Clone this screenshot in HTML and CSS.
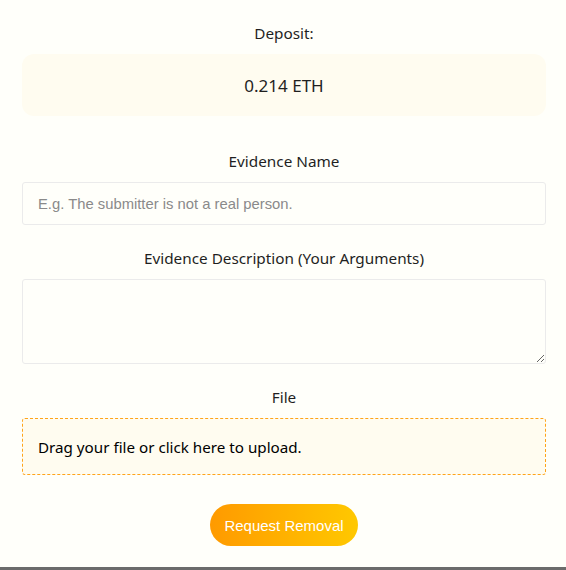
FILE: index.html
```html
<!DOCTYPE html>
<html>
<head>
<meta charset="utf-8">
<link rel="stylesheet" href="styles.css">
</head>
<body>
<div class="page">
  <form class="form">
    <div class="field">
      <div class="label">Deposit:</div>
      <div class="deposit">0.214 ETH</div>
    </div>
    <div class="field">
      <div class="label">Evidence Name</div>
      <input class="input" type="text" placeholder="E.g. The submitter is not a real person.">
    </div>
    <div class="field">
      <div class="label">Evidence Description (Your Arguments)</div>
      <textarea class="textarea"></textarea>
    </div>
    <div class="field">
      <div class="label">File</div>
      <div class="drop">Drag your file or click here to upload.</div>
    </div>
    <div class="actions">
      <button class="btn" type="button">Request Removal</button>
    </div>
  </form>
</div>
</body>
</html>
```
FILE: styles.css
```css
html, body {
  margin: 0;
  padding: 0;
  background: #fffffa;
}
.page {
  width: 566px;
  height: 567px;
  border-bottom: 3px solid #6b6b6b;
  box-sizing: content-box;
  font-family: "Noto Sans", "Open Sans", sans-serif;
  color: #1f1f1f;
}
.form {
  padding: 22px 20px 0 22px;
  display: flex;
  flex-direction: column;
}
.field {
  display: flex;
  flex-direction: column;
}
.label {
  text-align: center;
  font-size: 15.3px;
  font-weight: 400;
  line-height: 22px;
  margin-bottom: 10px;
}
.deposit {
  height: 62px;
  border-radius: 12px;
  background: #fffcf0;
  display: flex;
  align-items: center;
  justify-content: center;
  font-size: 17px;
  font-weight: 400;
  margin-bottom: 34px;
}
.input {
  height: 43px;
  box-sizing: border-box;
  border: 1px solid #ebebeb;
  border-radius: 3px;
  background: #fffffa;
  padding: 0 15px;
  font-family: "Liberation Sans", Arial, sans-serif;
  font-size: 14.8px;
  margin: 0 0 22px 0;
  outline: none;
}
.input::placeholder {
  color: #8a8a8a;
}
.textarea {
  height: 85px;
  box-sizing: border-box;
  border: 1px solid #ebebeb;
  border-radius: 3px;
  background: #fffffa;
  margin: 0 0 22px 0;
  resize: vertical;
  outline: none;
}
.drop {
  height: 57px;
  box-sizing: border-box;
  border: 1px dashed #ffa41a;
  border-radius: 3px;
  background: #fffcf0;
  display: flex;
  align-items: center;
  padding: 0 15px;
  font-size: 15.2px;
  font-weight: 400;
  color: #000;
  margin-bottom: 29px;
}
.actions {
  display: flex;
  justify-content: center;
}
.btn {
  width: 148px;
  height: 42px;
  border: none;
  border-radius: 21px;
  background: linear-gradient(90deg, #ff9a00, #ffc800);
  color: #fff;
  font-family: "Liberation Sans", Arial, sans-serif;
  font-size: 15px;
  padding: 0;
}
```
